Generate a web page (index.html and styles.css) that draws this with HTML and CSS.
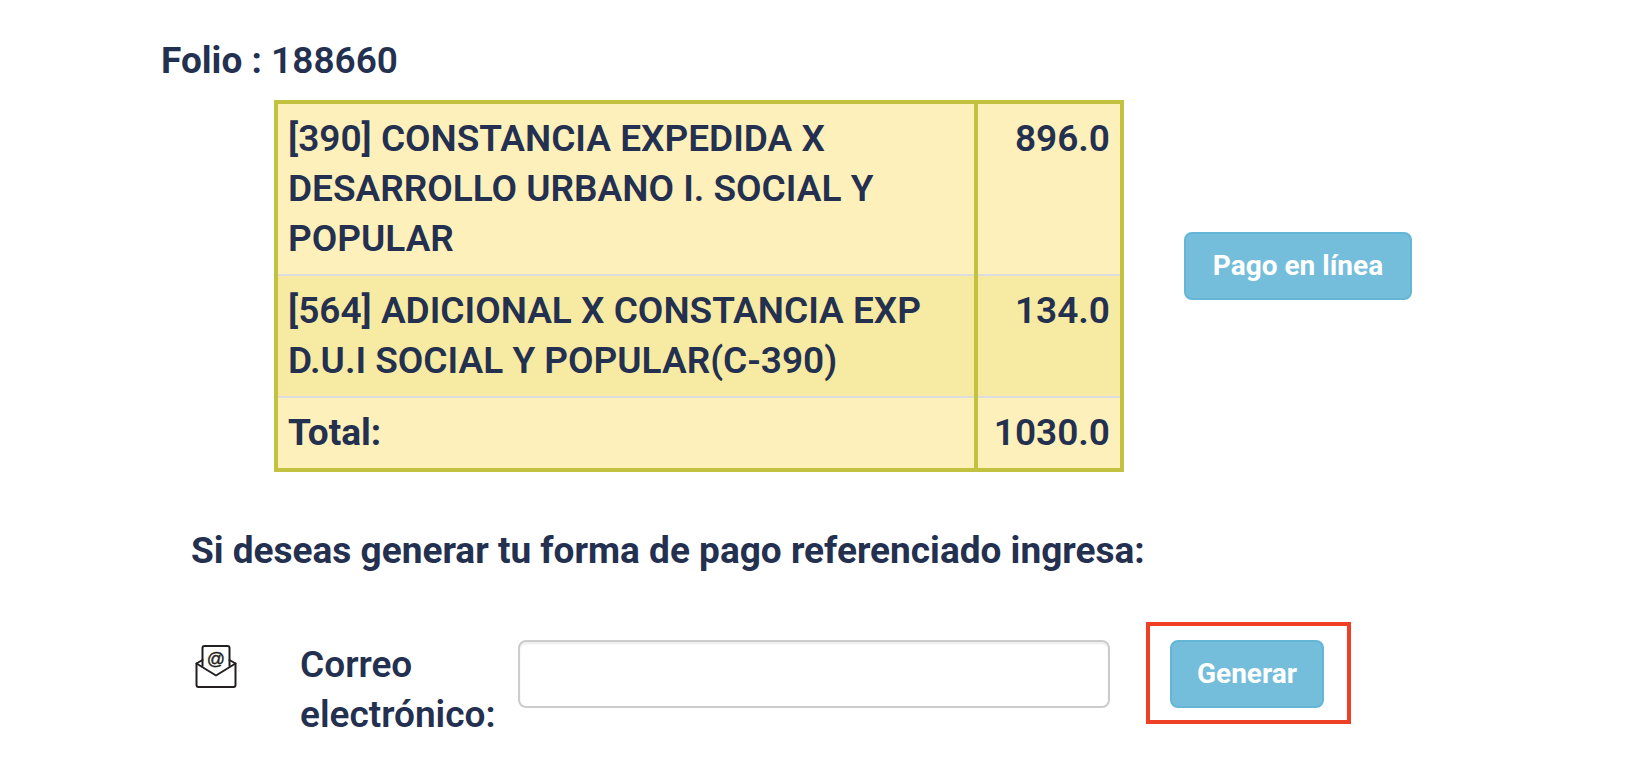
FILE: index.html
```html
<!DOCTYPE html>
<html lang="es">
<head>
<meta charset="utf-8">
<title>Folio 188660</title>
<meta name="viewport" content="width=device-width, initial-scale=1">
<link rel="stylesheet" href="styles.css">
</head>
<body>
<main class="page">
  <p class="folio"><strong>Folio :</strong> 188660</p>

  <section class="payment">
    <table class="charges">
      <tbody>
        <tr><td>[390] CONSTANCIA EXPEDIDA X DESARROLLO URBANO I. SOCIAL Y POPULAR</td><td class="amount">896.0</td></tr>
        <tr><td>[564] ADICIONAL X CONSTANCIA EXP D.U.I SOCIAL Y POPULAR(C-390)</td><td class="amount">134.0</td></tr>
        <tr><th scope="row">Total:</th><td class="amount">1030.0</td></tr>
      </tbody>
    </table>
    <button type="button" class="btn">Pago en línea</button>
  </section>

  <h2 class="heading">Si deseas generar tu forma de pago referenciado ingresa:</h2>

  <form class="reference">
    <svg class="mail" viewBox="0 0 42 44" aria-hidden="true">
      <g fill="none" stroke="#231f20" stroke-width="2" stroke-linejoin="round" stroke-linecap="round">
        <path d="M7.500 21V3q0-2 2-2h23q2 0 2 2v18"/>
        <path d="M7.500 15L1.500 18.500v21.500q0 2 2 2h35q2 0 2-2V18.500l-6-3.500"/>
        <path d="M1.500 18.500L21 30.500l19.500-12"/>
      </g>
      <text x="21" y="20" text-anchor="middle">@</text>
    </svg>
    <label class="label" for="email">Correo electrónico:</label>
    <input class="field" type="email" id="email" name="email">
    <div class="highlight"><button type="button" class="btn">Generar</button></div>
  </form>
</main>
</body>
</html>
```
FILE: styles.css
```css
* { box-sizing: border-box; }

body {
  margin: 0;
  background: #fff;
  color: #24304f;
  font: 600 37px/50px Roboto, "Noto Sans", sans-serif;
}

.page { padding: 36px 0 32px; }

.folio { margin: 0 0 14px; padding-left: 161px; }

.payment {
  display: grid;
  grid-template-columns: minmax(0, 1fr) auto;
  align-items: start;
  gap: 60px;
  padding: 0 232px 0 274px;
}

.payment .btn { margin-top: 132px; min-width: 228px; }

.charges {
  width: 100%;
  border-spacing: 0;
  border: 4px solid #c3c140;
  background: #fef0ba;
}

.charges td,
.charges th {
  padding: 10px;
  border-top: 2px solid #ddd;
  text-align: left;
  vertical-align: top;
}

.charges tr:first-child td { border-top: 0; }
.charges tr:nth-child(even) { background: #f7eaa2; }

.charges .amount {
  width: 146px;
  border-left: 4px solid #c3c140;
  text-align: right;
}

/* Row lines stop at the column divider. */
.charges tr:not(:first-child) .amount {
  border-top: 0;
  padding-top: 12px;
  background: linear-gradient(#ddd, #ddd) top / 100% 2px no-repeat padding-box;
}

.charges th,
.folio strong { font-weight: 700; }

.heading {
  margin: 54px 0 46px;
  padding-left: 191px;
  font-size: 37px;
  line-height: 50px;
}

.reference {
  display: grid;
  grid-template-columns: 105px 202px minmax(0, 1fr) auto;
  align-items: start;
  padding: 0 293px 0 195px;
}

.mail { width: 42px; height: 44px; margin-top: 23px; }
.mail text {
  font: 18px "Liberation Sans", sans-serif;
  fill: #231f20;
  stroke: #231f20;
  stroke-width: 0.4px;
}

.label { margin-top: 18px; }

.field {
  width: calc(100% - 16px);
  height: 68px;
  margin: 18px 0 0 16px;
  padding: 12px 24px;
  border: 2px solid #ccc;
  border-radius: 8px;
  background: #fff;
  box-shadow: inset 0 2px 2px rgba(0, 0, 0, .075);
  color: inherit;
  font: inherit;
}

.highlight {
  margin-left: 36px;
  padding: 14px 23px 12px 20px;
  border: 4px solid #ee4024;
}

.highlight .btn { display: block; min-width: 154px; }

.btn {
  height: 68px;
  padding: 0 24px;
  border: 2px solid #64b6d6;
  border-radius: 8px;
  background: #74bedc;
  color: #fff;
  font: 700 28px/40px Roboto, "Noto Sans", sans-serif;
  white-space: nowrap;
}
```
